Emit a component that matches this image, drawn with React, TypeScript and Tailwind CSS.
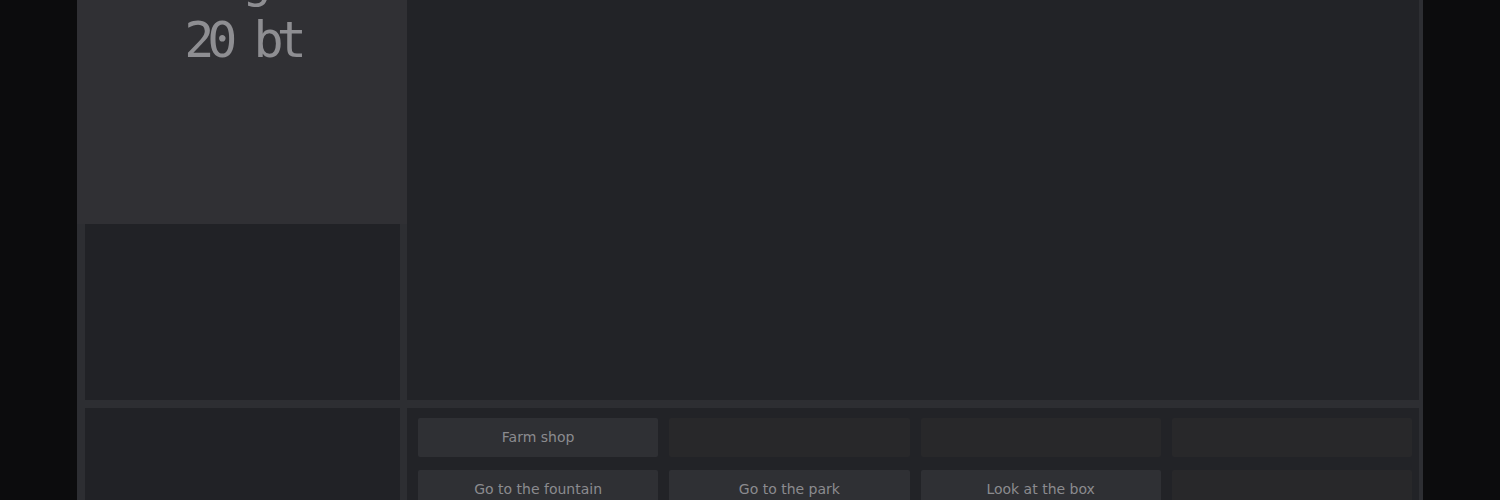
const actions = [
  ['Farm shop', '', '', ''],
  ['Go to the fountain', 'Go to the park', 'Look at the box', ''],
]

function ActionButton({ label }: { label: string }) {
  if (!label) {
    return <div className="h-[39px] rounded-[2px] bg-[#28282a]" />
  }
  return (
    <button className="flex h-[39px] items-center justify-center rounded-[2px] bg-[#2f3034] text-[14px] text-[#8b8b8f]">
      {label}
    </button>
  )
}

export default function App() {
  return (
    <div
      className="flex min-h-screen justify-center overflow-hidden bg-[#0c0c0d]"
      style={{ fontFamily: '"DejaVu Sans", sans-serif' }}
    >
      <div className="flex w-[1346px] flex-col bg-[#2d2e32] pr-[4px]">
        <div className="flex h-[400px]">
          <div className="flex w-[330px] flex-col">
            <div className="h-[224px] bg-[#303034] text-center text-[50px] leading-[60px] tracking-[-7px] text-[#8e8e92]" style={{ fontFamily: '"DejaVu Sans Mono", monospace' }}>
              <div className="-mt-[50px]">
                <div>Budget</div>
                <div>20 bt</div>
              </div>
            </div>
            <div className="ml-[8px] mr-[7px] flex-1 bg-[#212226]" />
          </div>
          <div className="flex-1 bg-[#222327]" />
        </div>

        <div className="mt-[8px] flex h-[180px]">
          <div className="ml-[8px] mr-[7px] w-[315px] bg-[#212226]" />
          <div className="flex-1 bg-[#222327] pl-[11px] pr-[7px] pt-[10px]">
            <div className="grid grid-cols-4 gap-x-[11px] gap-y-[13px]">
              {actions.flat().map((label, i) => (
                <ActionButton key={i} label={label} />
              ))}
            </div>
          </div>
        </div>
      </div>
    </div>
  )
}
